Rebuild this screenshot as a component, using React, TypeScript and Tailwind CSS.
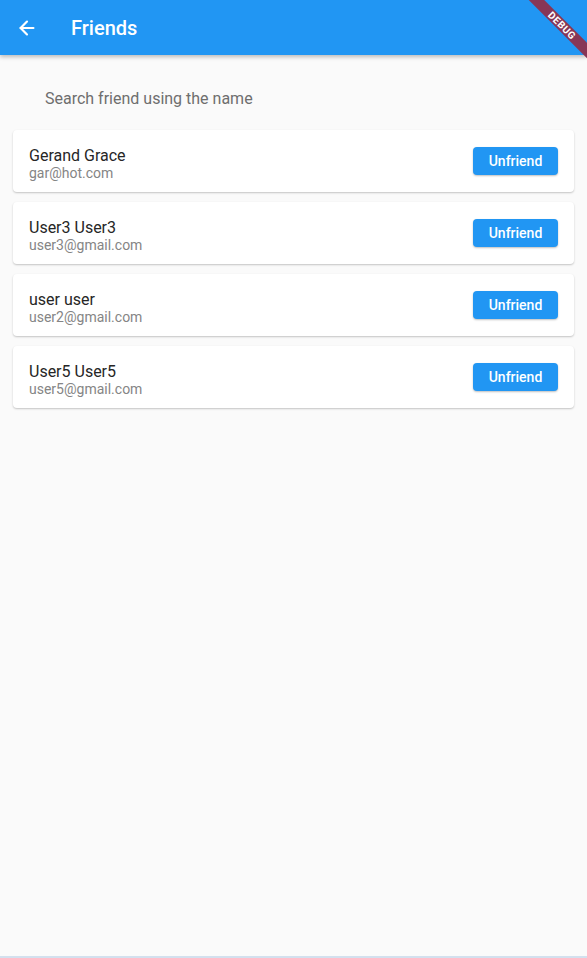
import { ArrowLeft } from 'lucide-react'

const friends = [
  { name: 'Gerand Grace', email: 'gar@hot.com' },
  { name: 'User3 User3', email: 'user3@gmail.com' },
  { name: 'user user', email: 'user2@gmail.com' },
  { name: 'User5 User5', email: 'user5@gmail.com' },
]

export default function App() {
  return (
    <div className="relative flex flex-col h-[958px] w-[587px] bg-[#fafafa] overflow-hidden font-['Roboto',sans-serif]">
      {/* App bar */}
      <header className="h-[55px] shrink-0 bg-[#2196f3] flex items-center shadow-[0_2px_4px_rgba(0,0,0,0.25)] z-10">
        <ArrowLeft size={22} strokeWidth={2.4} className="text-white ml-[16px]" />
        <h1 className="ml-[33px] text-white text-[20px] font-medium">Friends</h1>
      </header>

      {/* Debug banner */}
      <div className="absolute top-0 right-0 w-[100px] h-[100px] overflow-hidden pointer-events-none z-20">
        <div className="absolute left-[15px] top-[20px] w-[120px] h-[11px] rotate-45 bg-[#873656] flex items-center justify-center">
          <span className="text-white text-[10px] font-bold tracking-[0.5px] leading-none">DEBUG</span>
        </div>
      </div>

      {/* Search */}
      <div className="px-[45px] pt-[33px] pb-[19px]">
        <p className="text-[16px] text-[#6e6e6e] leading-[22px]">Search friend using the name</p>
      </div>

      {/* List */}
      <div className="flex flex-col gap-[10px] px-[13px] pt-[1px]">
        {friends.map((f) => (
          <div
            key={f.email}
            className="h-[62px] bg-white rounded-[4px] shadow-[0_1px_2px_rgba(0,0,0,0.22)] flex items-center pl-[16px] pr-[16px]"
          >
            <div className="flex-1 flex flex-col pt-[6px]">
              <span className="text-[16px] text-[#262626] leading-[19px]">{f.name}</span>
              <span className="text-[14px] text-[#858585] leading-[17px]">{f.email}</span>
            </div>
            <button className="w-[85px] h-[28px] bg-[#2196f3] rounded-[4px] text-white text-[14px] font-medium shadow-[0_1px_2px_rgba(0,0,0,0.25)]">
              Unfriend
            </button>
          </div>
        ))}
      </div>

      <div className="flex-1" />
      <div className="h-[2px] bg-[#d3e0ee]" />
    </div>
  )
}
